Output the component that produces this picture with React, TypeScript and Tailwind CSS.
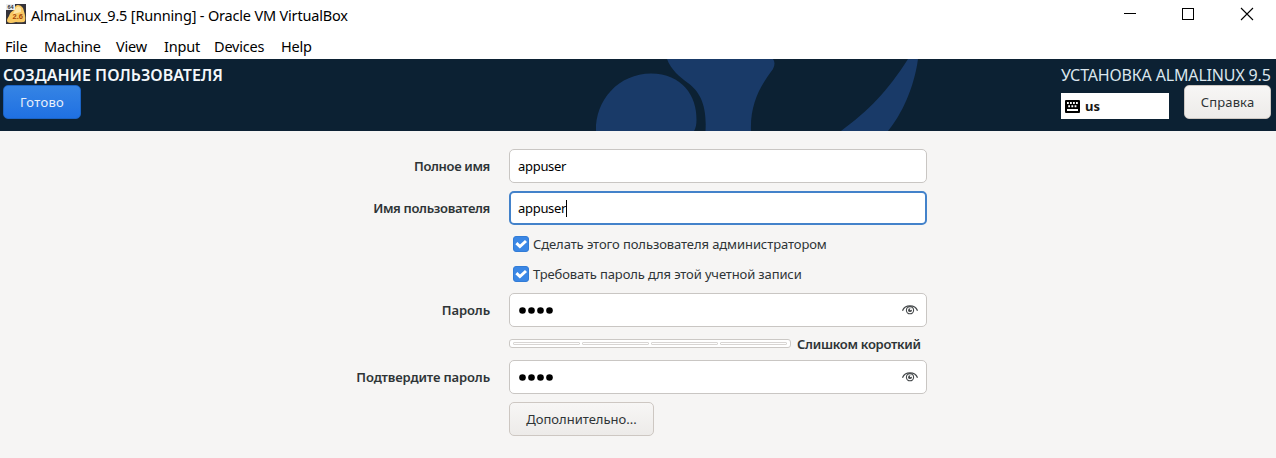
import React from "react";

function VmIcon() {
  return (
    <svg className="mt-[4px] ml-[6px] h-5 w-5 shrink-0" viewBox="0 0 20 20">
      <rect width="20" height="20" fill="#35333a" />
      <path d="M8 6Q9 1 12 1T17 4Q18 7 19 11Q20 17 18 18Q13 18.500 10 18Q4 20 1.500 18Q0 16 3 12Q4 8 8 6Z" fill="#f9c963" />
      <path d="M10 4Q12 1 15 4L15 8L7 10Z" fill="#fde5a4" />
      <rect x="0" y="0" width="9" height="6" fill="#e9edf0" />
      <text x="1.5" y="5" fontSize="5.5" fontWeight="700" fontFamily="Liberation Sans, sans-serif" fill="#2e3036">64</text>
      <text x="6.500" y="15" fontSize="7.5" fontWeight="700" fontFamily="Liberation Sans, sans-serif" fill="#a54508">2.6</text>
    </svg>
  );
}

function TitleBar() {
  return (
    <div className="flex h-[30px] items-start">
      <VmIcon />
      <span className="mt-[4px] ml-[5px] whitespace-nowrap text-[14.5px] leading-[22px] tracking-[-0.18px] text-black">
        AlmaLinux_9.5 [Running] - Oracle VM VirtualBox
      </span>
      <svg className="ml-auto h-[30px] w-[156px]" viewBox="1120 0 156 30" fill="none" stroke="#000" shapeRendering="crispEdges">
        <path d="M1124 13.5h12" />
        <path d="M1182.5 8.5h11v11h-11z" />
        <path d="M1241 8l12 12M1253 8l-12 12" shapeRendering="auto" strokeWidth="1.1" />
      </svg>
    </div>
  );
}

function MenuBar() {
  return (
    <div className="flex h-[29px] items-center pb-[2px] pt-[4px] pl-[5px] text-[14.5px] leading-5 tracking-[-0.2px] text-black">
      <span className="w-[39px]">File</span>
      <span className="w-[72px]">Machine</span>
      <span className="w-[48px]">View</span>
      <span className="w-[50px]">Input</span>
      <span className="w-[67px]">Devices</span>
      <span>Help</span>
    </div>
  );
}

function Header() {
  return (
    <div className="relative h-[72px] overflow-hidden bg-[#0c2133]">
      <svg className="absolute left-[590px] top-0 h-[72px] w-[340px]" viewBox="590 59 340 72" fill="#193a68">
        <path d="M596 131C595 100 619 73.500 651 73.500C682 73.500 697 96 696.500 120Q696.500 127 694 131Z" />
        <path d="M667 59H773Q776 63 773 69C761 85 750 103 751 131H705.500C707 105 700 92 688 83C680 77 671 70 667 59Z" />
        <path d="M908 59H918C914 88 902 114 888 131H841C869 110 887 92 908 59Z" />
      </svg>
      <div className="relative flex justify-between pr-[5px] pl-[3px]">
        <div className="flex flex-col items-start">
          <div className="mt-[6px] h-[20px] whitespace-nowrap text-[16px] font-semibold leading-[20px] text-[#f4f8fb]">СОЗДАНИЕ ПОЛЬЗОВАТЕЛЯ</div>
          <button className="h-[34px] w-[78px] rounded-[5px] border border-[#1b63c4] bg-linear-to-b from-[#3584e4] to-[#1f70e2] text-[13px] leading-5 tracking-[0.3px] text-[#e8f0fb]">Готово</button>
        </div>
        <div className="w-[210px]">
          <div className="mt-[6px] h-[20px] whitespace-nowrap text-[16px] leading-[20px] tracking-[-0.16px] text-[#dbe6ed]">УСТАНОВКА ALMALINUX 9.5</div>
          <div className="flex items-start justify-between">
            <div className="mt-[8px] flex h-[26px] w-[108px] items-center bg-white pl-[4px]">
              <svg className="h-[13px] w-[15px]" viewBox="0 0 15 13">
                <rect width="15" height="13" rx="1" fill="#000" />
                <path d="M2 3h1.800m1.200 0h1.800m1.200 0h1.800m1.200 0h1.800M3.200 6.200h1.800m1.400 0h1.800m1.400 0h1.800" stroke="#fff" strokeWidth="1.900" />
                <path d="M2 10h11" stroke="#fff" strokeWidth="2" />
              </svg>
              <span className="ml-[5px] text-[13px] font-bold leading-5 text-[#171717]">us</span>
            </div>
            <button className="h-[34px] w-[87px] rounded-[5px] border border-[#cdc7c2] bg-linear-to-b from-[#f7f6f5] to-[#edebe9] text-[13px] leading-5 tracking-[0.15px] text-[#2e3436]">Справка</button>
          </div>
        </div>
      </div>
    </div>
  );
}

function Row({ label, children, className }: { label?: string; children: React.ReactNode; className: string }) {
  return (
    <div className={`flex items-center ${className}`}>
      <div className="mr-[19px] w-[490px] shrink-0 text-right text-[13px] font-semibold leading-5">{label}</div>
      {children}
    </div>
  );
}

function Eye() {
  return (
    <svg className="ml-auto h-4 w-4" viewBox="0 0 16 16" fill="none" stroke="#45494b">
      <path d="M.5 8.700C3 2.300 13 2.300 15.500 8.700" strokeWidth="1.200" />
      <circle cx="8" cy="8.200" r="3.600" strokeWidth="1.100" />
      <circle cx="8" cy="8.200" r="1.900" fill="#45494b" stroke="none" />
      <circle cx="8.900" cy="7.200" r="1" fill="#fff" stroke="none" />
    </svg>
  );
}

function PasswordField() {
  return (
    <div className="flex h-[34px] w-[418px] items-center rounded-[5px] border border-[#c9c6c3] bg-white pr-[8px] pl-[9px]">
      <svg className="h-[7px] w-[34px]" viewBox="0 0 34 7" fill="#000">
        <circle cx="3.500" cy="3.500" r="3.300" />
        <circle cx="12.500" cy="3.500" r="3.300" />
        <circle cx="21.500" cy="3.500" r="3.300" />
        <circle cx="30.500" cy="3.500" r="3.300" />
      </svg>
      <Eye />
    </div>
  );
}

function Check({ children }: { children: string }) {
  return (
    <div className="flex items-center pl-[4px] text-[13px] leading-5">
      <svg className="h-4 w-4" viewBox="0 0 16 16">
        <rect x=".5" y=".5" width="15" height="15" rx="2.500" fill="#3b87e5" stroke="#327cd6" />
        <path d="M3.400 7.200L6.900 10.500L13 5" fill="none" stroke="#fff" strokeWidth="3" />
      </svg>
      <span className="ml-[4px] whitespace-nowrap">{children}</span>
    </div>
  );
}

export default function App() {
  return (
    <div className="flex h-[458px] w-[1276px] flex-col overflow-hidden bg-white font-['Noto_Sans',sans-serif] text-[#2e3436]">
      <TitleBar />
      <MenuBar />
      <Header />
      <main className="flex-1 bg-[#f6f5f4] pt-[18px]">
        <Row label="Полное имя" className="mb-[8px] h-[34px] tracking-[-0.35px]">
          <div className="flex h-[34px] w-[418px] items-center rounded-[5px] border border-[#c9c6c3] bg-white pl-[8px] text-[13px] leading-5 tracking-[-0.3px] text-black">appuser</div>
        </Row>
        <Row label="Имя пользователя" className="h-[34px] tracking-[-0.33px]">
          <div className="flex h-[34px] w-[418px] items-center rounded-[5px] border-2 border-[#4382ca] bg-white pl-[7px] text-[13px] leading-5 tracking-[-0.3px] text-black">
            appuser<span className="h-[17px] w-px bg-black" />
          </div>
        </Row>
        <Row className="mt-[4px] h-[30px] tracking-[-0.09px]"><Check>Сделать этого пользователя администратором</Check></Row>
        <Row className="h-[30px] tracking-[-0.13px]"><Check>Требовать пароль для этой учетной записи</Check></Row>
        <Row label="Пароль" className="mt-[4px] h-[34px] tracking-[-0.1px]"><PasswordField /></Row>
        <Row className="h-[33px] tracking-[-0.28px]">
          <div className="flex h-[9px] w-[282px] items-center gap-[2px] rounded-[3px] border border-[#cbc8c5] bg-white px-[3px]">
            {[0, 1, 2, 3].map((i) => <span key={i} className="h-[3px] flex-1 rounded-[1px] border border-[#d8d5d3]" />)}
          </div>
          <span className="ml-[6px] text-[13px] font-semibold leading-5">Слишком короткий</span>
        </Row>
        <Row label="Подтвердите пароль" className="mb-[8px] h-[34px] tracking-[-0.12px]"><PasswordField /></Row>
        <Row className="h-[34px]">
          <button className="h-[34px] w-[145px] rounded-[5px] border border-[#cdc7c2] bg-linear-to-b from-[#f7f6f5] to-[#edebe9] text-[13px] leading-5">Дополнительно...</button>
        </Row>
      </main>
    </div>
  );
}
